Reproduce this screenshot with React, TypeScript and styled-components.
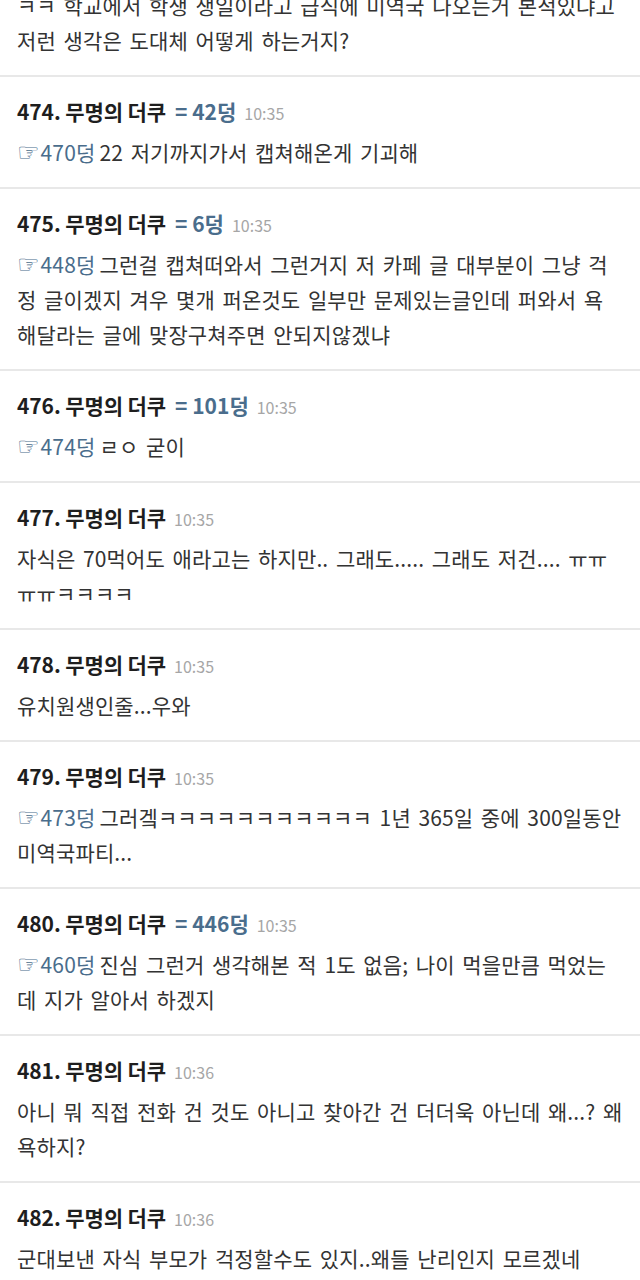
import React from 'react';
import styled, { createGlobalStyle } from 'styled-components';

// ─── Tokens ──────────────────────────────────────────────────────────────────
const C = {
  text:    '#333333',
  strong:  '#1e1e1e',
  link:    '#4a6d8c',
  time:    '#a6a6a6',
  divider: '#e8e8e8',
  bg:      '#ffffff',
};

const FONT = `'Noto Sans CJK KR', 'Noto Sans', sans-serif`;

const GlobalStyle = createGlobalStyle`
  * { box-sizing: border-box; }
  html, body { margin: 0; padding: 0; background: ${C.bg}; }
  body { font-family: ${FONT}; overflow: hidden; }
`;

// ─── Layout ──────────────────────────────────────────────────────────────────
const Page = styled.div`
  width: 640px;
  height: 1280px;
  overflow: hidden;
  background: ${C.bg};
  display: flex;
  flex-direction: column;
`;

const Post = styled.article<{ $cut?: boolean }>`
  border-top: ${p => (p.$cut ? 'none' : `2px solid ${C.divider}`)};
  padding: ${p => (p.$cut ? '0 8px 17px 17px' : '20px 8px 17px 17px')};
  margin-top: ${p => (p.$cut ? '-12px' : '0')};
  flex-shrink: 0;
`;

const Header = styled.div`
  display: flex;
  align-items: baseline;
  height: 28px;
  line-height: 28px;
  margin-bottom: 10px;
  white-space: nowrap;
`;

const Name = styled.span`
  font-family: ${FONT};
  font-weight: 700;
  font-size: 21px;
  letter-spacing: -0.1px;
  color: ${C.strong};
`;

const Score = styled.span`
  font-family: ${FONT};
  font-weight: 700;
  font-size: 21px;
  color: ${C.link};
  margin-left: 9px;
`;

const Time = styled.span`
  font-family: ${FONT};
  font-size: 16px;
  color: ${C.time};
  margin-left: 8px;
`;

const Body = styled.div`
  font-family: ${FONT};
  font-size: 21px;
  line-height: 35px;
  letter-spacing: 0.15px;
  word-spacing: 2.7px;
  color: ${C.text};
  white-space: nowrap;
`;

const Line = styled.div`
  height: 35px;
`;

const RefLink = styled.span`
  color: ${C.link};
  margin-right: 4px;
`;

const Hand = styled.span`
  display: inline-block;
  font-family: 'DejaVu Sans', sans-serif;
  font-size: 25px;
  line-height: 1;
  margin-right: 1px;
`;

// ─── Data ────────────────────────────────────────────────────────────────────
interface PostData {
  no: number;
  time: string;
  score?: number;
  ref?: number;
  lines: string[];
}

const posts: PostData[] = [
  { no: 474, score: 42, time: '10:35', ref: 470, lines: ['22 저기까지가서 캡쳐해온게 기괴해'] },
  {
    no: 475, score: 6, time: '10:35', ref: 448,
    lines: [
      '그런걸 캡쳐떠와서 그런거지 저 카페 글 대부분이 그냥 걱',
      '정 글이겠지 겨우 몇개 퍼온것도 일부만 문제있는글인데 퍼와서 욕',
      '해달라는 글에 맞장구쳐주면 안되지않겠냐',
    ],
  },
  { no: 476, score: 101, time: '10:35', ref: 474, lines: ['ㄹㅇ 굳이'] },
  {
    no: 477, time: '10:35',
    lines: ['자식은 70먹어도 애라고는 하지만.. 그래도..... 그래도 저건.... ㅠㅠ', 'ㅠㅠㅋㅋㅋㅋ'],
  },
  { no: 478, time: '10:35', lines: ['유치원생인줄...우와'] },
  {
    no: 479, time: '10:35', ref: 473,
    lines: ['그러겤ㅋㅋㅋㅋㅋㅋㅋㅋㅋㅋㅋ 1년 365일 중에 300일동안', '미역국파티...'],
  },
  {
    no: 480, score: 446, time: '10:35', ref: 460,
    lines: ['진심 그런거 생각해본 적 1도 없음; 나이 먹을만큼 먹었는', '데 지가 알아서 하겠지'],
  },
  {
    no: 481, time: '10:36',
    lines: ['아니 뭐 직접 전화 건 것도 아니고 찾아간 건 더더욱 아닌데 왜...? 왜', '욕하지?'],
  },
  { no: 482, time: '10:36', lines: ['군대보낸 자식 부모가 걱정할수도 있지..왜들 난리인지 모르겠네'] },
];

const prevLines = [
  'ㅋㅋ 학교에서 학생 생일이라고 급식에 미역국 나오는거 본적있냐고',
  '저런 생각은 도대체 어떻게 하는거지?',
];

// ─── Component ───────────────────────────────────────────────────────────────
const PostItem = ({ post }: { post: PostData }) => (
  <Post>
    <Header>
      <Name>{post.no}. 무명의 더쿠</Name>
      {post.score !== undefined && <Score>= {post.score}덩</Score>}
      <Time>{post.time}</Time>
    </Header>
    <Body>
      {post.lines.map((line, i) => (
        <Line key={i}>
          {i === 0 && post.ref !== undefined && (
            <RefLink>
              <Hand>☞</Hand>
              {post.ref}덩
            </RefLink>
          )}
          {line}
        </Line>
      ))}
    </Body>
  </Post>
);

export default function App() {
  return (
    <>
      <GlobalStyle />
      <Page>
        <Post $cut>
          <Body>
            {prevLines.map((line, i) => (
              <Line key={i}>{line}</Line>
            ))}
          </Body>
        </Post>
        {posts.map(p => (
          <PostItem key={p.no} post={p} />
        ))}
      </Page>
    </>
  );
}
